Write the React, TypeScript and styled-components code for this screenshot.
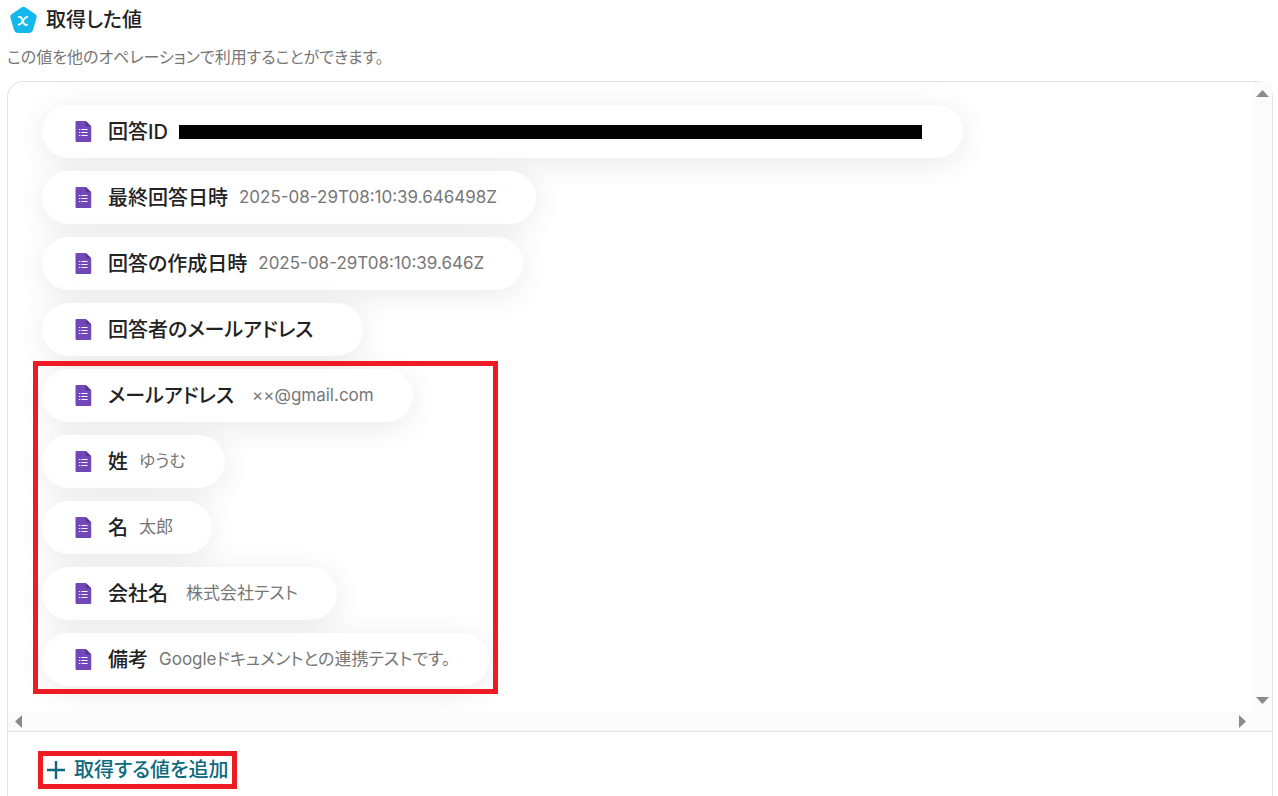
import React from "react";
import styled, { createGlobalStyle } from "styled-components";

const GlobalStyle = createGlobalStyle`
  *, *::before, *::after { box-sizing: border-box; }
  body {
    margin: 0;
    background: #fff;
    color: #222;
    font-family: Inter, "Noto Sans CJK JP", sans-serif;
    font-feature-settings: "palt";
    font-optical-sizing: none;
  }
`;

const Page = styled.main`
  display: flex;
  flex-direction: column;
  min-height: 100vh;
  padding: 5px 5px 0 7px;
`;

const TitleRow = styled.header`
  display: flex;
  align-items: center;
  gap: 8px;
  height: 30px;
  padding-left: 2px;
`;

const Title = styled.h1`
  margin: 0;
  font-size: 20px;
  line-height: 28px;
  font-weight: 500;
`;

const Description = styled.p`
  margin: 10px 0 12px;
  font-size: 16px;
  line-height: 24px;
  color: #777;
`;

const Panel = styled.section`
  display: flex;
  flex: 1;
  flex-direction: column;
  border: 1px solid #e2e2e2;
  border-bottom: 0;
  border-radius: 16px 16px 0 0;
`;

const ScrollArea = styled.div`
  display: grid;
  grid-template-columns: minmax(0, 1fr) 19px;
  grid-template-rows: auto 19px;
  border-bottom: 1px solid #e2e2e2;
`;

const Values = styled.div`
  display: flex;
  flex-direction: column;
  align-items: flex-start;
  gap: 13px;
  padding: 23px 34px 26px;
  overflow: hidden;
  border-top-left-radius: 16px;
`;

const Track = styled.div<{ $horizontal?: boolean }>`
  display: flex;
  flex-direction: ${(p) => (p.$horizontal ? "row" : "column")};
  align-items: center;
  justify-content: space-between;
  padding: ${(p) => (p.$horizontal ? "0 7px" : "8px 0")};
  background: #fbfbfb;
`;

const Corner = styled.div`
  background: #fbfbfb;
`;

const ScrollButton = styled.button`
  display: flex;
  padding: 0;
  border: 0;
  background: none;
  color: #8b8b8b;
`;

const Highlighted = styled.div`
  position: relative;
  display: flex;
  flex-direction: column;
  align-items: flex-start;
  gap: 13px;

  &::after {
    content: "";
    position: absolute;
    inset: -8px -9px;
    border: 5px solid #ed1c24;
    pointer-events: none;
  }
`;

const Pill = styled.div`
  display: flex;
  align-items: center;
  height: 53px;
  padding: 0 39px 0 33px;
  border-radius: 27px;
  background: #fff;
  box-shadow: 0 5px 32px rgba(0, 0, 0, 0.09);
  white-space: nowrap;
`;

const Label = styled.span`
  margin: 0 11px 0 16px;
  font-size: 20px;
  line-height: 28px;
  font-weight: 500;
`;

const Value = styled.span<{ $indent?: boolean }>`
  padding: 0 0 2px ${(p) => (p.$indent ? "7px" : "0")};
  font-size: 17px;
  line-height: 26px;
  color: #777;
`;

const Redacted = styled.span`
  width: 743px;
  height: 14px;
  margin-right: 2px;
  background: #000;
`;

const Footer = styled.footer`
  padding: 19px 30px;
`;

const AddButton = styled.button`
  display: flex;
  align-items: center;
  gap: 9px;
  height: 38px;
  padding: 0 4px;
  border: 5px solid #ed1c24;
  background: #fff;
  color: #0b6a80;
  font: inherit;
  font-feature-settings: inherit;
  font-size: 20px;
  line-height: 28px;
  font-weight: 500;
`;

const AppIcon = () => (
  <svg width="29" height="28" viewBox="0 0 29 28" aria-hidden="true">
    <path
      d="M12.6 1.4Q14.5.1 16.4 1.4L26.5 8.3Q28.2 9.6 27.6 11.6L23.9 24.3Q23.1 27 20.5 27H8.5Q5.9 27 5.1 24.3L1.4 11.6Q.8 9.6 2.5 8.3Z"
      fill="#13b9ec"
    />
    <path
      d="M10 11.100C12.200 10.600 12.900 11.900 13.600 14.200C14.500 17.300 15.500 19.600 18 18.700"
      fill="none"
      stroke="#fff"
      strokeWidth="2"
      strokeLinecap="round"
    />
    <path
      d="M18.300 10.900C16.300 10.800 15.400 12.600 14.100 14.600C12.900 16.600 11.700 18.700 9.600 18.700"
      fill="none"
      stroke="#fff"
      strokeWidth="1.700"
      strokeLinecap="round"
    />
  </svg>
);

const FormIcon = () => (
  <svg width="17" height="21" viewBox="0 0 17 21" aria-hidden="true">
    <path d="M1.500 0h9.300L16.200 5.200V20q0 1-1 1H1.500Q.5 21 .5 20V1Q.5 0 1.500 0Z" fill="#7248b9" />
    <path d="M10.800 0L16.200 5.200h-4.400q-1 0-1-1Z" fill="#54348c" />
    <path d="M6.500 8.500h6M6.500 11.500h6M6.500 14.500h6M3.900 8.500h1.400M3.900 11.500h1.400M3.900 14.500h1.400" stroke="#fff" strokeWidth="1.200" />
  </svg>
);

const PlusIcon = () => (
  <svg width="18" height="18" viewBox="0 0 18 18" aria-hidden="true">
    <path d="M9 0v18M0 9h18" stroke="currentColor" strokeWidth="2.400" />
  </svg>
);

const arrows = {
  up: { w: 13, h: 7, d: "M0 7 6.500 0 13 7Z" },
  down: { w: 13, h: 7, d: "M0 0H13L6.500 7Z" },
  left: { w: 7, h: 13, d: "M7 0V13L0 6.500Z" },
  right: { w: 7, h: 13, d: "M0 0V13L7 6.500Z" },
};

const Arrow = ({ direction, label }: { direction: keyof typeof arrows; label: string }) => {
  const { w, h, d } = arrows[direction];
  return (
    <ScrollButton type="button" aria-label={label}>
      <svg width={w} height={h} viewBox={`0 0 ${w} ${h}`} aria-hidden="true">
        <path d={d} fill="currentColor" />
      </svg>
    </ScrollButton>
  );
};

type Item = { label: string; value?: string; indent?: boolean; redacted?: boolean };

const responseItems: Item[] = [
  { label: "回答ID", redacted: true },
  { label: "最終回答日時", value: "2025-08-29T08:10:39.646498Z" },
  { label: "回答の作成日時", value: "2025-08-29T08:10:39.646Z" },
  { label: "回答者のメールアドレス" },
];

const answerItems: Item[] = [
  { label: "メールアドレス", value: "××@gmail.com", indent: true },
  { label: "姓", value: "ゆうむ" },
  { label: "名", value: "太郎" },
  { label: "会社名", value: "株式会社テスト", indent: true },
  { label: "備考", value: "Googleドキュメントとの連携テストです。" },
];

const ValuePill = ({ label, value, indent, redacted }: Item) => (
  <Pill>
    <FormIcon />
    <Label>{label}</Label>
    {redacted && <Redacted />}
    {value && <Value $indent={indent}>{value}</Value>}
  </Pill>
);

export default function App() {
  return (
    <>
      <GlobalStyle />
      <Page lang="ja">
        <TitleRow>
          <AppIcon />
          <Title>取得した値</Title>
        </TitleRow>
        <Description>この値を他のオペレーションで利用することができます。</Description>
        <Panel>
          <ScrollArea>
            <Values>
              {responseItems.map((item) => (
                <ValuePill key={item.label} {...item} />
              ))}
              <Highlighted>
                {answerItems.map((item) => (
                  <ValuePill key={item.label} {...item} />
                ))}
              </Highlighted>
            </Values>
            <Track>
              <Arrow direction="up" label="上へスクロール" />
              <Arrow direction="down" label="下へスクロール" />
            </Track>
            <Track $horizontal>
              <Arrow direction="left" label="左へスクロール" />
              <Arrow direction="right" label="右へスクロール" />
            </Track>
            <Corner />
          </ScrollArea>
          <Footer>
            <AddButton type="button">
              <PlusIcon />
              取得する値を追加
            </AddButton>
          </Footer>
        </Panel>
      </Page>
    </>
  );
}
